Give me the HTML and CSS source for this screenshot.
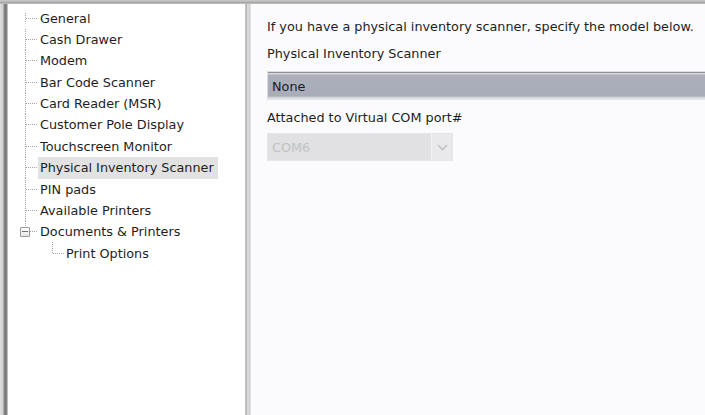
FILE: index.html
```html
<!DOCTYPE html>
<html lang="en">
<head>
<meta charset="utf-8">
<title>Options</title>
<link rel="stylesheet" href="styles.css">
</head>
<body>
<div class="window">
  <div class="frame-top"></div>
  <div class="panes">
    <div class="frame-left"></div>
    <nav class="tree">
      <ul class="nodes">
        <li class="node first"><span class="guide"><span class="stem"></span></span><span class="label">General</span></li>
        <li class="node"><span class="guide"><span class="stem"></span></span><span class="label">Cash Drawer</span></li>
        <li class="node"><span class="guide"><span class="stem"></span></span><span class="label">Modem</span></li>
        <li class="node"><span class="guide"><span class="stem"></span></span><span class="label">Bar Code Scanner</span></li>
        <li class="node"><span class="guide"><span class="stem"></span></span><span class="label">Card Reader (MSR)</span></li>
        <li class="node"><span class="guide"><span class="stem"></span></span><span class="label">Customer Pole Display</span></li>
        <li class="node"><span class="guide"><span class="stem"></span></span><span class="label">Touchscreen Monitor</span></li>
        <li class="node"><span class="guide"><span class="stem"></span></span><span class="label selected">Physical Inventory Scanner</span></li>
        <li class="node"><span class="guide"><span class="stem"></span></span><span class="label">PIN pads</span></li>
        <li class="node"><span class="guide"><span class="stem"></span></span><span class="label">Available Printers</span></li>
        <li class="node last"><span class="guide"><span class="toggle"></span><span class="stem short"></span></span><span class="label">Documents &amp; Printers</span></li>
        <li class="node child"><span class="guide"><span class="stem"></span></span><span class="label">Print Options</span></li>
      </ul>
    </nav>
    <div class="splitter"></div>
    <section class="settings">
      <p class="hint">If you have a physical inventory scanner, specify the model below.</p>
      <p class="field-label">Physical Inventory Scanner</p>
      <div class="combo model"><span class="combo-text">None</span></div>
      <p class="field-label port-label">Attached to Virtual COM port#</p>
      <div class="combo port">
        <span class="combo-text">COM6</span>
        <span class="combo-button">
          <svg width="11" height="7" viewBox="0 0 11 7"><path d="M1 1 L5.5 5.5 L10 1" fill="none" stroke="#c4c4c4" stroke-width="1.6"/></svg>
        </span>
      </div>
    </section>
  </div>
</div>
</body>
</html>
```

FILE: styles.css
```css
* { box-sizing: border-box; }

html, body {
  margin: 0;
  padding: 0;
  width: 705px;
  height: 415px;
  overflow: hidden;
}

body {
  font-family: "DejaVu Sans", Verdana, sans-serif;
  font-size: 12.8px;
  color: #1e1e1e;
  background: #ffffff;
}

.window {
  display: flex;
  flex-direction: column;
  height: 415px;
}

.frame-top {
  height: 4px;
  flex: none;
  background: linear-gradient(to bottom, #c9c9c9 0, #b4b4b4 2px, #9c9c9c 3px, #d8d8d8 4px);
}

.panes {
  flex: 1;
  display: flex;
  min-height: 0;
}

.frame-left {
  width: 8px;
  flex: none;
  background: linear-gradient(to right, #dedede 0, #cfcfcf 3px, #8e8e8e 4px, #6f6f6f 6px, #9a9a9a 7px, #e6e6e6 8px);
}

/* Navigation tree */
.tree {
  width: 237px;
  flex: none;
  background: #ffffff;
  padding-top: 3.6px;
}

.nodes {
  list-style: none;
  margin: 0;
  padding: 0;
}

.node {
  display: flex;
  align-items: center;
  height: 21.35px;
  white-space: nowrap;
}

.guide {
  width: 32px;
  align-self: stretch;
  flex: none;
  display: flex;
  align-items: center;
  background-image: repeating-linear-gradient(to bottom, #a6a6a6 0 1px, transparent 1px 2px);
  background-repeat: no-repeat;
  background-position: 17px 0;
  background-size: 1px 100%;
}

.node.first .guide {
  background-position: 17px 50%;
  background-size: 1px 50%;
}

.node.last .guide {
  background-size: 1px 50%;
}

.node.child .guide {
  width: 58px;
  background-position: 44px 0;
  background-size: 1px 50%;
}

.stem {
  margin-left: 18px;
  width: 12px;
  height: 1px;
  background-image: repeating-linear-gradient(to right, #a6a6a6 0 1px, transparent 1px 2px);
}

.stem.short {
  margin-left: 0;
  width: 8px;
}

.node.child .stem {
  margin-left: 45px;
  width: 11px;
}

.toggle {
  margin-left: 12px;
  width: 10px;
  height: 10px;
  flex: none;
  border: 1px solid #9a9a9a;
  border-radius: 1px;
  background: linear-gradient(#6e6e6e, #6e6e6e) center / 6px 1px no-repeat, linear-gradient(to bottom, #ffffff, #e4e4e4);
}

.label {
  padding: 3px 2px;
  margin-left: -2px;
  line-height: 15px;
}

.label.selected {
  background: #e2e2e2;
  padding: 3.5px 4px 3.5px 2px;
}

/* Splitter between the panes */
.splitter {
  width: 6px;
  flex: none;
  background: linear-gradient(to right, #d0d0d0 0, #b2b2b2 1px, #c4c4c4 2px, #eeeeee 3px, #c6c6c6 4px, #d6d6d6 5px, #eeeeee 6px);
}

/* Settings page */
.settings {
  flex: 1;
  background: #fbfbfd;
  padding: 15px 0 0 16px;
  min-width: 0;
}

.settings p {
  margin: 0;
  line-height: 15px;
  white-space: nowrap;
}

.field-label {
  margin-top: 12px !important;
}

.combo {
  display: flex;
  align-items: center;
}

.combo.model {
  margin-top: 10px;
  height: 29px;
  margin-right: -20px;
  border-top: 1px solid #dcdde2;
  border-bottom: 1px solid #e6e7ea;
  border-left: 1px solid #dcdde2;
  background: linear-gradient(to bottom, #8e9198 0, #8e9198 1px, #d6d8de 1px, #d6d8de 2px, #abaebb 3px, #a9acb9 24px, #c7c9d0 25px, #e8e9ec 27px);
  padding-left: 4px;
}

.combo.model .combo-text {
  padding-top: 1px;
  color: #1c1c1c;
}

.port-label {
  margin-top: 10px !important;
}

.combo.port {
  margin-top: 8px;
  width: 186px;
  height: 28px;
  border: 1px solid #e6e6e6;
  background: #e1e1e3;
  padding-left: 4px;
}

.combo.port .combo-text {
  flex: 1;
  color: #c2c2c2;
}

.combo-button {
  width: 21px;
  align-self: stretch;
  display: flex;
  align-items: center;
  justify-content: center;
  background: #e9e9eb;
  border-left: 1px solid #f2f2f2;
}
```
